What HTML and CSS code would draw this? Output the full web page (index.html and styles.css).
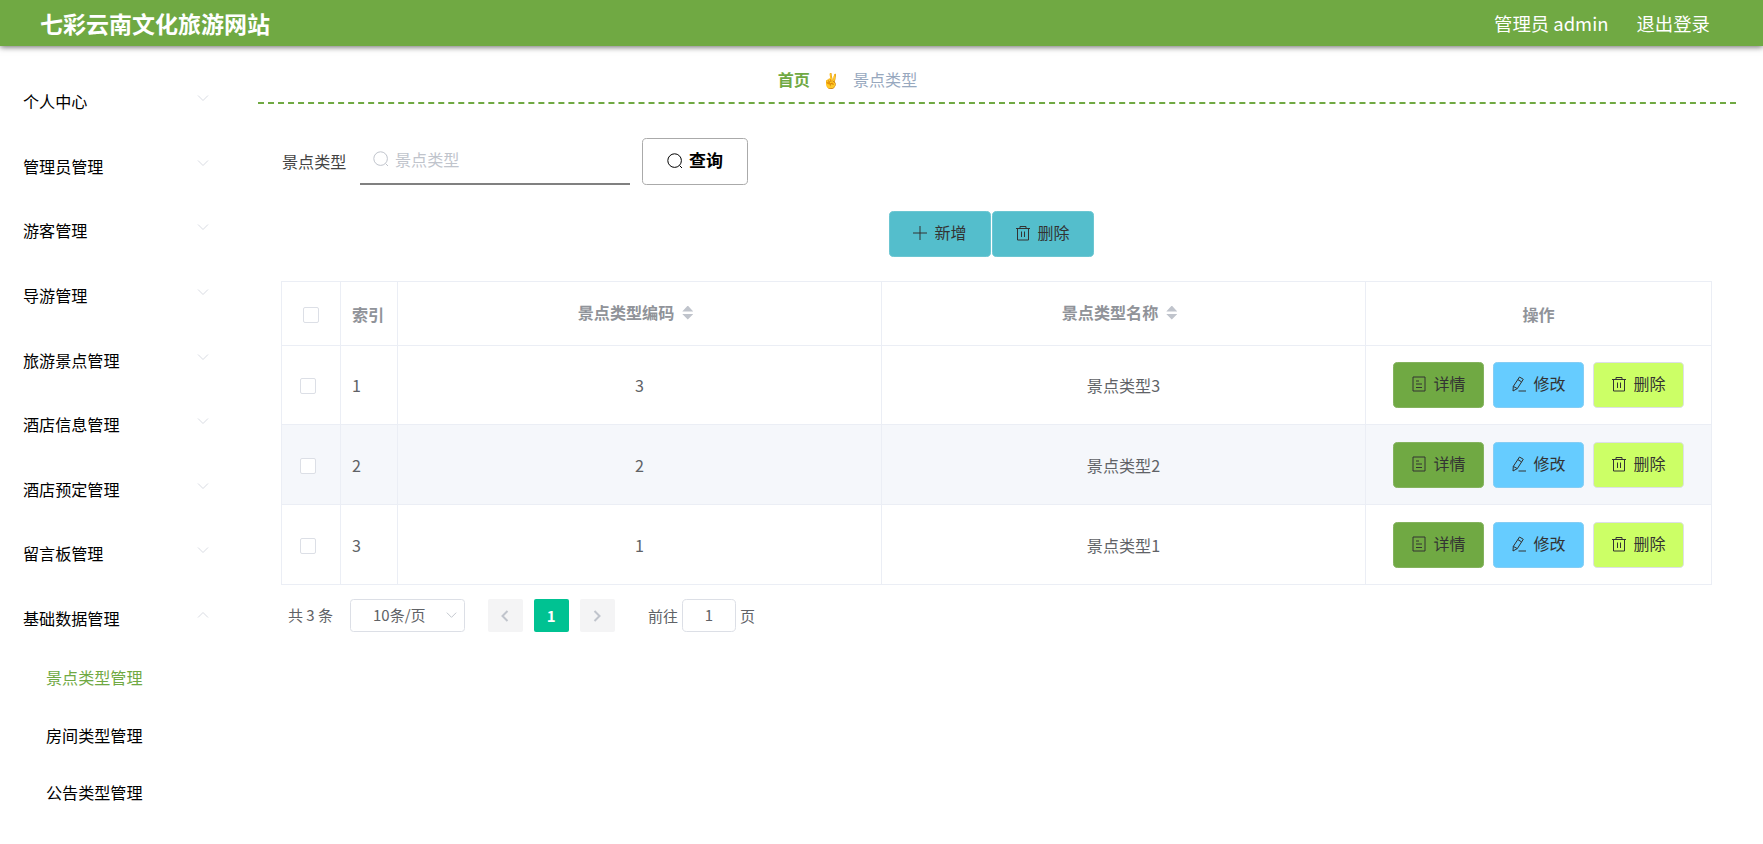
FILE: index.html
```
<!DOCTYPE html>
<html lang="zh-CN">
  <head>
    <meta charset="UTF-8">
    <meta name="viewport" content="width=device-width, initial-scale=1.0">
    <title>七彩云南文化旅游网站</title>
    <link rel="stylesheet" href="styles.css">
  </head>
  <body>
    <!-- icons -->
    <svg class="sprite">
      <symbol id="i-down" viewBox="0 0 16 16"><path d="M3 5.500l5 5 5-5"/></symbol>
      <symbol id="i-left" viewBox="0 0 16 16"><path d="M10.5 3l-5 5 5 5"/></symbol>
      <symbol id="i-search" viewBox="0 0 16 16"><circle cx="7.6" cy="7.6" r="6.8"/><path d="M12.6 12.6l2.4 2.4"/></symbol>
      <symbol id="i-plus" viewBox="0 0 16 16"><path d="M8 1v14M1 8h14"/></symbol>
      <symbol id="i-delete" viewBox="0 0 16 16"><path d="M1 3.5h14M5 3.5V1.500h6v2M2.500 3.500V15h11V3.500M6.500 6.500v5.500M9.500 6.500v5.500"/></symbol>
      <symbol id="i-doc" viewBox="0 0 16 16"><path d="M2 1h12v14H2zM5 5h3M5 8h6M5 11.500h6"/></symbol>
      <symbol id="i-edit" viewBox="0 0 16 16"><path d="M8.500 1l3.800 2.300-6 9.300L2 15l.300-4.600zM6.800 3.600l3.800 2.300M2.300 10.400l4 2.200M7.500 15H15"/></symbol>
    </svg>
    <header class="header">
      <h1 class="title">七彩云南文化旅游网站</h1>
      <div class="user">
        <span>管理员 admin</span>
        <span>退出登录</span>
      </div>
    </header>
    <div class="container">
      <nav class="aside">
        <ul class="menu">
          <li>个人中心<svg class="arrow"><use href="#i-down"/></svg></li>
          <li>管理员管理<svg class="arrow"><use href="#i-down"/></svg></li>
          <li>游客管理<svg class="arrow"><use href="#i-down"/></svg></li>
          <li>导游管理<svg class="arrow"><use href="#i-down"/></svg></li>
          <li>旅游景点管理<svg class="arrow"><use href="#i-down"/></svg></li>
          <li>酒店信息管理<svg class="arrow"><use href="#i-down"/></svg></li>
          <li>酒店预定管理<svg class="arrow"><use href="#i-down"/></svg></li>
          <li>留言板管理<svg class="arrow"><use href="#i-down"/></svg></li>
          <li>基础数据管理<svg class="arrow up"><use href="#i-down"/></svg></li>
        </ul>
        <ul class="submenu">
          <li class="active">景点类型管理</li>
          <li>房间类型管理</li>
          <li>公告类型管理</li>
        </ul>
      </nav>
      <main class="main">
        <div class="breadcrumb">
          <b>首页</b><span class="sep">✌️</span><span>景点类型</span>
        </div>
        <div class="content">
          <div class="search">
            <label>景点类型</label>
            <div class="search-input"><svg class="icon"><use href="#i-search"/></svg>景点类型</div>
            <button class="btn btn-search"><svg class="icon"><use href="#i-search"/></svg>查询</button>
          </div>
          <div class="actions">
            <button class="btn btn-top"><svg class="icon"><use href="#i-plus"/></svg>新增</button>
            <button class="btn btn-top"><svg class="icon"><use href="#i-delete"/></svg>删除</button>
          </div>
          <table class="table">
            <colgroup>
              <col class="c-check"><col class="c-index"><col class="c-code"><col class="c-name"><col class="c-ops">
            </colgroup>
            <thead>
              <tr>
                <th><i class="checkbox"></i></th>
                <th class="left">索引</th>
                <th class="sort">景点类型编码<i class="caret"></i></th>
                <th class="sort">景点类型名称<i class="caret"></i></th>
                <th>操作</th>
              </tr>
            </thead>
            <tbody>
              <tr>
                <td class="left"><i class="checkbox"></i></td>
                <td class="left">1</td>
                <td>3</td>
                <td>景点类型3</td>
                <td>
                  <div class="ops">
                    <button class="btn detail"><svg class="icon"><use href="#i-doc"/></svg>详情</button>
                    <button class="btn edit"><svg class="icon"><use href="#i-edit"/></svg>修改</button>
                    <button class="btn del"><svg class="icon"><use href="#i-delete"/></svg>删除</button>
                  </div>
                </td>
              </tr>
              <tr class="striped">
                <td class="left"><i class="checkbox"></i></td>
                <td class="left">2</td>
                <td>2</td>
                <td>景点类型2</td>
                <td>
                  <div class="ops">
                    <button class="btn detail"><svg class="icon"><use href="#i-doc"/></svg>详情</button>
                    <button class="btn edit"><svg class="icon"><use href="#i-edit"/></svg>修改</button>
                    <button class="btn del"><svg class="icon"><use href="#i-delete"/></svg>删除</button>
                  </div>
                </td>
              </tr>
              <tr>
                <td class="left"><i class="checkbox"></i></td>
                <td class="left">3</td>
                <td>1</td>
                <td>景点类型1</td>
                <td>
                  <div class="ops">
                    <button class="btn detail"><svg class="icon"><use href="#i-doc"/></svg>详情</button>
                    <button class="btn edit"><svg class="icon"><use href="#i-edit"/></svg>修改</button>
                    <button class="btn del"><svg class="icon"><use href="#i-delete"/></svg>删除</button>
                  </div>
                </td>
              </tr>
            </tbody>
          </table>
          <div class="pagination">
            <span class="total">共 3 条</span>
            <div class="sizes">10条/页<svg class="icon"><use href="#i-down"/></svg></div>
            <button class="page"><svg class="icon"><use href="#i-left"/></svg></button>
            <button class="page current">1</button>
            <button class="page"><svg class="icon next"><use href="#i-left"/></svg></button>
            <div class="jump">前往<span class="jump-input">1</span>页</div>
          </div>
        </div>
      </main>
    </div>
  </body>
</html>
```
FILE: styles.css
```
* {
  box-sizing: border-box;
}
body {
  margin: 0;
  height: 844px;
  overflow: hidden;
  background: #fff;
  color: #606266;
  font-family: "Noto Sans CJK SC", sans-serif;
  font-size: 16.1px;
}
ul {
  margin: 0;
  padding: 0;
  list-style: none;
}
svg {
  fill: none;
  stroke: currentColor;
}
.sprite {
  display: none;
}
.icon {
  width: 16px;
  height: 16px;
  flex: none;
}

/* header */
.header {
  display: flex;
  justify-content: space-between;
  align-items: center;
  height: 46px;
  padding: 0 53px 0 40px;
  background: #70a943;
  color: #fff;
  box-shadow: 0 1px 6px rgba(0, 0, 0, 0.6);
}
.title {
  margin: 0;
  font-size: 23px;
  line-height: 44px;
}
.user {
  display: flex;
  gap: 28px;
  padding-bottom: 1px;
  font-size: 18.4px;
}

.container {
  display: flex;
}

/* sidebar */
.aside {
  width: 258px;
  padding-top: 23px;
  color: #000;
}
.menu li {
  display: flex;
  justify-content: space-between;
  align-items: center;
  height: 64.6px;
  padding: 0 47px 0 23px;
}
.arrow {
  width: 16px;
  height: 16px;
  margin-bottom: 6px;
  color: #d9dce3;
}
.up {
  transform: rotate(180deg);
}
.submenu li {
  height: 57.5px;
  padding-left: 46px;
  line-height: 55px;
}
.submenu .active {
  color: #70a943;
}

/* main */
.main {
  width: 1478px;
}
.breadcrumb {
  display: flex;
  justify-content: center;
  align-items: center;
  height: 58px;
  padding: 10px 299px 0 0;
  border-bottom: 2px dashed #70a943;
  color: #97a8be;
}
.breadcrumb b {
  color: #70a943;
}
.sep {
  width: 43px;
  font-size: 14.500px;
  text-align: center;
}
.content {
  padding: 34px 24px 0;
}
.search {
  display: flex;
  align-items: center;
  height: 47px;
}
.search label {
  width: 78px;
  padding-bottom: 1px;
  color: #444;
}
.search-input {
  display: flex;
  align-items: center;
  gap: 6px;
  width: 270px;
  height: 47px;
  padding: 0 0 3px 13px;
  border-bottom: 2px solid #808080;
  color: #c0c4cc;
}
.btn {
  display: flex;
  justify-content: center;
  align-items: center;
  gap: 6px;
  padding: 0 0 3px;
  border: 1px solid #dcdfe6;
  border-radius: 4.600px;
  color: #333;
  font-family: inherit;
  font-size: 16px;
}
.btn .icon {
  position: relative;
  top: 1px;
}
.btn-search {
  width: 106px;
  height: 47px;
  margin-left: 12px;
  padding-bottom: 4px;
  border-color: #aaa;
  background: #fff;
  color: #000;
  font-size: 17px;
  font-weight: bold;
}
.actions {
  display: flex;
  justify-content: center;
  gap: 1px;
  padding: 26px 12px 24px 0;
}
.btn-top {
  width: 102px;
  height: 46px;
  padding-bottom: 5px;
  border-color: #6cc6d2;
  background: #54becc;
}

/* table */
.table {
  width: 1431px;
  margin-left: -1px;
  table-layout: fixed;
  border-collapse: collapse;
  border: 1px solid #ebeef5;
  text-align: center;
}
.c-check {
  width: 59px;
}
.c-index {
  width: 57px;
}
.c-code,
.c-name {
  width: 484px;
}
.table th,
.table td {
  padding: 0;
  border: 1px solid #ebeef5;
}
.table th {
  height: 64px;
  color: #909399;
}
.table td {
  height: 80px;
}
.table tbody tr:first-child td {
  height: 79px;
  padding-bottom: 1px;
}
.table .left {
  padding-left: 11px;
  text-align: left;
}
.table td:first-child {
  padding-left: 18px;
}
.table .sort {
  padding: 0 8px 4px 0;
}
.striped {
  background: #f5f7fb;
}
.checkbox {
  display: inline-block;
  width: 16px;
  height: 16px;
  margin-bottom: 3px;
  border: 1px solid #dcdfe6;
  border-radius: 2px;
  background: #fff;
  vertical-align: middle;
}
.caret {
  display: inline-block;
  width: 11px;
  height: 14px;
  margin-left: 8px;
  background: #c0c4cc;
  clip-path: polygon(50% 0, 100% 43%, 0 43%, 0 60%, 100% 60%, 50% 100%, 0 60%, 0 43%);
  vertical-align: -1px;
}
.ops {
  display: flex;
  justify-content: center;
  gap: 9px;
}
.ops .btn {
  width: 91px;
  height: 46px;
}
.ops .detail {
  border-color: #84b25e;
  background: #70a943;
}
.ops .edit {
  border-color: #84cdf5;
  background: #66ccff;
}
.ops .del {
  background: #ccff66;
}

/* pagination */
.pagination {
  display: flex;
  align-items: center;
  padding: 14px 5px 0;
  font-size: 15px;
}
.total {
  width: 63px;
  padding: 0 0 2px 1px;
}
.sizes {
  display: flex;
  justify-content: space-between;
  align-items: center;
  width: 115px;
  height: 33px;
  margin-right: 23px;
  padding: 0 5px 2px 22px;
  border: 1px solid #dcdfe6;
  border-radius: 3.500px;
}
.sizes .icon {
  width: 15px;
  color: #c0c4cc;
}
.page {
  display: flex;
  justify-content: center;
  align-items: center;
  width: 34.500px;
  height: 33px;
  margin-right: 11.500px;
  padding: 0;
  border: 0;
  border-radius: 2px;
  background: #f4f4f5;
  color: #c0c4cc;
  font-family: inherit;
  font-size: 15px;
  font-weight: bold;
}
.page .icon {
  stroke-width: 2;
}
.next {
  transform: rotate(180deg);
}
.current {
  background: #00c292;
  color: #fff;
}
.jump {
  display: flex;
  align-items: center;
  margin-left: 22px;
}
.jump-input {
  width: 54px;
  height: 33px;
  margin: 0 4px 0 4px;
  border: 1px solid #dcdfe6;
  border-radius: 4.600px;
  line-height: 30px;
  text-align: center;
}
```
